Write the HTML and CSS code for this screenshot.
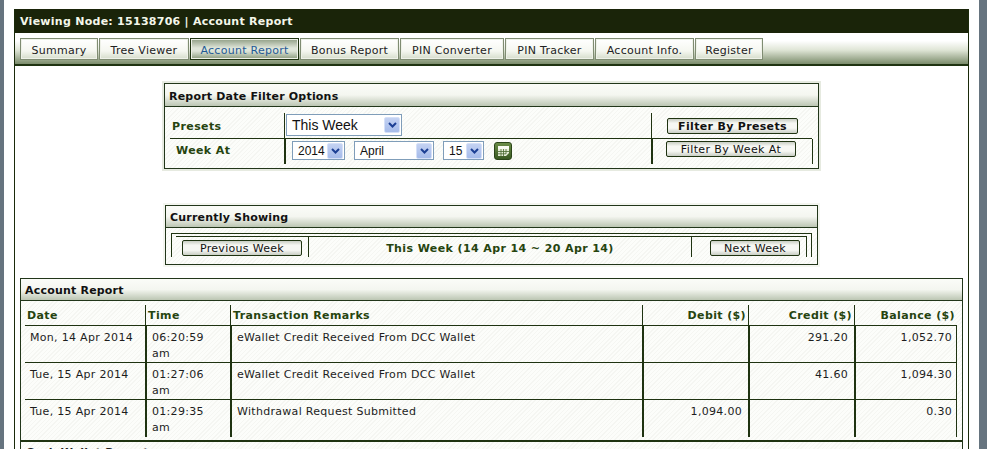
FILE: index.html
```html
<!DOCTYPE html>
<html lang="en">
<head>
<meta charset="utf-8">
<title>Account Report</title>
<link rel="stylesheet" href="styles.css">
</head>
<body>
<div class="frame">
  <div class="page">
    <h1 class="node-title">Viewing Node: 15138706 | Account Report</h1>
    <nav class="tabs">
      <a class="tab w78">Summary</a>
      <a class="tab w90">Tree Viewer</a>
      <a class="tab tab-active w109">Account Report</a>
      <a class="tab w99">Bonus Report</a>
      <a class="tab w104">PIN Converter</a>
      <a class="tab w89">PIN Tracker</a>
      <a class="tab w99">Account Info.</a>
      <a class="tab w68">Register</a>
    </nav>
    <main class="content">
      <section class="panel filter">
        <h2 class="panel-title">Report Date Filter Options</h2>
        <div class="filter-grid">
          <div class="f-label f-label-top">Presets</div>
          <div class="f-ctrl f-ctrl-top"><span class="sel sel-big w116">This Week<i class="arrow"><svg viewBox="0 0 9 6" width="9" height="6"><path d="M1 1l3.500 3.500L8 1" fill="none" stroke="#1c3f94" stroke-width="2"/></svg></i></span></div>
          <div class="f-btn f-btn-top"><button class="btn btn-bold w131">Filter By Presets</button></div>
          <div class="f-label f-label-bot">Week At</div>
          <div class="f-ctrl f-ctrl-bot">
            <span class="sel w53">2014<i class="arrow"><svg viewBox="0 0 9 6" width="9" height="6"><path d="M1 1l3.500 3.500L8 1" fill="none" stroke="#1c3f94" stroke-width="2"/></svg></i></span>
            <span class="sel w80">April<i class="arrow"><svg viewBox="0 0 9 6" width="9" height="6"><path d="M1 1l3.500 3.500L8 1" fill="none" stroke="#1c3f94" stroke-width="2"/></svg></i></span>
            <span class="sel w41">15<i class="arrow"><svg viewBox="0 0 9 6" width="9" height="6"><path d="M1 1l3.500 3.500L8 1" fill="none" stroke="#1c3f94" stroke-width="2"/></svg></i></span>
            <span class="cal"><svg viewBox="0 0 11 10" width="11" height="10"><path d="M0 0h11v7l-3 3H0z" fill="#e6edd8"/><path d="M0 0h11v3H0z" fill="#f7f9f1"/><path d="M3 3v7M5.500 3v7M8 3v5M0 5.500h11M0 7.800h8" stroke="#47682f" stroke-width="0.8"/></svg></span>
          </div>
          <div class="f-btn f-btn-bot"><button class="btn w130">Filter By Week At</button></div>
        </div>
      </section>

      <section class="panel showing">
        <h2 class="panel-title">Currently Showing</h2>
        <div class="show-outer">
          <div class="show-row">
            <div class="show-prev"><button class="btn btn-nav w120">Previous Week</button></div>
            <div class="show-mid">This Week (14 Apr 14 ~ 20 Apr 14)</div>
            <div class="show-next"><button class="btn btn-nav w90">Next Week</button></div>
          </div>
        </div>
      </section>

      <section class="panel report">
        <h2 class="panel-title">Account Report</h2>
        <div class="rep-table">
          <div class="rep-row rep-head">
            <div class="c">Date</div><div class="c">Time</div><div class="c">Transaction Remarks</div>
            <div class="c num">Debit ($)</div><div class="c num">Credit ($)</div><div class="c num">Balance ($)</div>
          </div>
          <div class="rep-row">
            <div class="c">Mon, 14 Apr 2014</div><div class="c">06:20:59 am</div><div class="c">eWallet Credit Received From DCC Wallet</div>
            <div class="c num"></div><div class="c num">291.20</div><div class="c num">1,052.70</div>
          </div>
          <div class="rep-row">
            <div class="c">Tue, 15 Apr 2014</div><div class="c">01:27:06 am</div><div class="c">eWallet Credit Received From DCC Wallet</div>
            <div class="c num"></div><div class="c num">41.60</div><div class="c num">1,094.30</div>
          </div>
          <div class="rep-row">
            <div class="c">Tue, 15 Apr 2014</div><div class="c">01:29:35 am</div><div class="c">Withdrawal Request Submitted</div>
            <div class="c num">1,094.00</div><div class="c num"></div><div class="c num">0.30</div>
          </div>
        </div>
        <h2 class="panel-sub">Cash Wallet Report</h2>
      </section>
    </main>
  </div>
</div>
</body>
</html>
```
FILE: styles.css
```css
* { box-sizing: border-box; }
html, body { margin: 0; height: 449px; overflow: hidden; background: #fff; }
body { font-family: "DejaVu Sans", sans-serif; font-size: 11px; color: #1d1d1d; }
.frame {
  height: 449px; overflow: hidden;
  border-left: 4px solid #66747f;
  border-right: 8px solid #66747f;
  padding: 9px 10px 0 10px;
}
.page { width: 955px; border-left: 1px solid #1a2a0a; border-right: 1px solid #1a2a0a; }
.node-title {
  margin: 0; height: 24px; line-height: 22px; padding: 2px 0 0 5px;
  background: #1a2409; color: #f4f7ea; font-size: 11px; font-weight: bold; letter-spacing: 0.27px;
}
.tabs {
  display: flex; height: 33px; padding: 5px 0 0 5px; gap: 1px;
  background: linear-gradient(#fff 0, #fff 25%, #dfe5d6 55%, #7b8c6b 100%);
  border-bottom: 2px solid #1f3311;
}
.tab {
  height: 22px; line-height: 20px; padding-top: 2px; text-align: center; letter-spacing: 0.27px; color: #222;
  background: linear-gradient(#fff, #f5f7f0 60%, #d5dccb);
  border: 1px solid #7f8c72;
  outline: 1px solid #eef1e8; outline-offset: -2px;
}
.tab-active { background: linear-gradient(#8f9d84, #dfe5d9 45%, #dfe5d9 60%, #8a9a7c); color: #1f5a96; border-color: #1f3311; }
.w78 { width: 78px; } .w90 { width: 90px; } .w109 { width: 109px; } .w99 { width: 99px; }
.w104 { width: 104px; } .w89 { width: 89px; } .w68 { width: 68px; }
.w116 { width: 116px; } .w131 { width: 131px; } .w130 { width: 130px; } .w53 { width: 53px; } .w80 { width: 80px; } .w41 { width: 41px; } .w120 { width: 120px; }
.content { display: flex; flex-direction: column; padding: 17px 5px 0; }
.panel {
  border: 1px solid #22361a;
  background: repeating-linear-gradient(135deg, #fcfdfa 0 2px, #f5f6f2 2px 3px);
}
.panel-title {
  margin: 0; height: 23px; line-height: 26px; padding-left: 4px; font-size: 11px; font-weight: bold; letter-spacing: 0.2px; color: #111;
  background: linear-gradient(#fbfcf8, #f4f6f0 50%, #bcc6b3);
  border-bottom: 1px solid #22361a;
}
.filter { width: 655px; height: 86px; margin-left: 144px; box-shadow: 0 0 0 2px #e6eae0; }
.filter-grid {
  display: grid; grid-template-columns: 114px 367px 167px; grid-template-rows: 26px 25px;
  margin: 6px 5px 0 5px;
}
.f-label { font-weight: bold; color: #26440f; letter-spacing: 0.4px; display: flex; align-items: center; }
.f-label-top { padding: 2px 0 0 2px; border-bottom: 1px solid #1f3311; }
.f-label-bot { padding: 0 0 2px 6px; }
.f-ctrl { display: flex; align-items: center; border-left: 1px solid #1f3311; }
.f-ctrl-top { padding: 0 0 1px 1px; border-bottom: 1px solid #1f3311; }
.f-ctrl-bot { padding: 0 0 2px 6px; gap: 9px; border-left-width: 2px; }
.f-btn { display: flex; align-items: center; border-left: 1px solid #1f3311; padding-left: 15px; }
.f-btn-top { border-bottom: 1px solid #1f3311; padding-left: 15px; padding-top: 1px; width: 161px; }
.f-btn-bot { border-left-width: 2px; border-right: 1px solid #1f3311; width: 162px; padding: 0 0 5px 13px; }
.sel {
  display: inline-flex; align-items: center; justify-content: space-between; height: 19px;
  background: #fff; border: 1px solid #7f9db9; padding: 0 1px 0 5px;
  font-family: "Liberation Sans", sans-serif; font-size: 12px; color: #111;
}
.sel-big { height: 22px; font-size: 14px; }
.arrow { display: flex; align-items: center; justify-content: center; width: 16px; height: 16px; background: linear-gradient(#c4d2f2, #a5bbea); border: 1px solid #d5e0f8; border-radius: 2px; }
.cal {
  display: flex; align-items: center; justify-content: center; width: 18px; height: 18px; margin-left: 1px;
  background: linear-gradient(#6a8c47, #3a5a22); border: 1px solid #2a4518; border-radius: 3px;
}
.btn {
  height: 16px; padding: 2px 0 0; font: 11px "DejaVu Sans", sans-serif; letter-spacing: 0.4px; color: #111; line-height: 12px;
  background: linear-gradient(#c9cec4, #f6f7f3 30%, #f6f7f3 65%, #c9cec4);
  border: 1px solid #1f3311; border-radius: 2px;
}
.btn-bold { font-weight: bold; letter-spacing: 0.33px; }
.btn-nav { letter-spacing: 0.3px; }
.showing { width: 653px; height: 60px; margin: 36px 0 0 145px; box-shadow: 0 0 0 2px #f4f6f0; }
.showing .panel-title { height: 22px; line-height: 24px; }
.show-outer { height: 24px; margin: 5px 5px 0 5px; border: 1px solid #1f3311; border-bottom: 0; padding: 2px 4px 0 4px; }
.show-row {
  display: flex; height: 21px; border-top: 1px solid #1f3311; border-right: 1px solid #1f3311;
}
.show-prev { width: 133px; padding: 3px 0 0 6px; border-right: 1px solid #1f3311; }
.show-mid { flex: 1; text-align: center; font-weight: bold; color: #26440f; letter-spacing: 0.4px; line-height: 24px; }
.show-next { width: 115px; padding: 3px 0 0 18px; border-left: 1px solid #1f3311; }
.report { width: 943px; margin-top: 13px; height: 200px; }
.report .panel-title { height: 22px; line-height: 23px; }
.rep-table { margin: 4px 5px 0 4px; height: 135px; }
.rep-row {
  display: grid; grid-template-columns: 120px 85px 412px 106px 106px 103px;
  height: 37px; border-bottom: 1px solid #1f3311; border-right: 1px solid #1f3311; line-height: 16px; letter-spacing: 0.3px;
}
.rep-row:last-child { border-bottom: 0; }
.rep-row .c { padding: 4px 5px 0; border-left: 2px solid #1f3311; overflow: hidden; }
.rep-row .c:first-child { border-left-width: 0; padding-left: 5px; }
.rep-row .c:nth-child(2) { padding-left: 5px; }
.num { text-align: right; }
.rep-row .num { padding-right: 6px; }
.rep-row .num:last-child { padding-right: 5px; }
.rep-head { height: 21px; border-right: 0; font-weight: bold; color: #26440f; letter-spacing: 0.38px; background: transparent; border-bottom: 1px solid #1f3311; }
.rep-head .c { border-left-width: 1px; padding: 3px 2px 0; }
.rep-head .c:first-child { padding-left: 2px; }
.rep-head .c:nth-child(2) { padding-left: 2px; }
.rep-head .num, .rep-head .num:last-child { padding-right: 2px; }
.panel-sub { margin: 0; padding: 4px 0 0 5px; border-top: 2px solid #1f3311; font-size: 11px; letter-spacing: 0.2px; height: 30px; }
```
